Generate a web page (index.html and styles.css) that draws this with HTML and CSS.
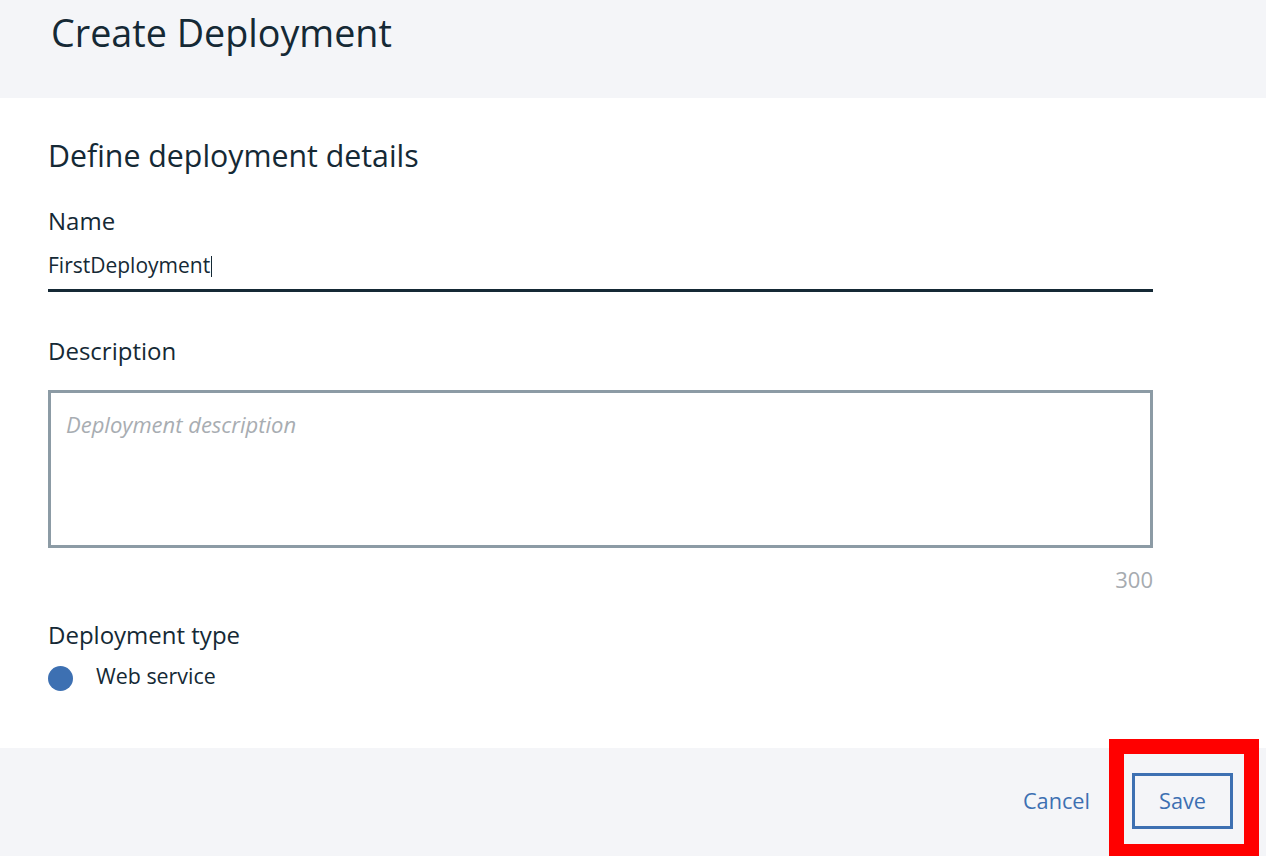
FILE: index.html
```html
<!DOCTYPE html>
<html lang="en">
<head>
<meta charset="utf-8">
<title>Create Deployment</title>
<link rel="stylesheet" href="styles.css">
</head>
<body>
<div class="page">
  <header class="header">
    <h1 class="title">Create Deployment</h1>
  </header>
  <main class="content">
    <h2 class="section-title">Define deployment details</h2>
    <label class="label label-name">Name</label>
    <div class="text-input"><span class="value">FirstDeployment</span><span class="caret"></span></div>
    <label class="label label-desc">Description</label>
    <div class="textarea"><span class="placeholder">Deployment description</span></div>
    <div class="counter">300</div>
    <label class="label label-type">Deployment type</label>
    <div class="radio-row">
      <span class="radio"></span>
      <span class="radio-text">Web service</span>
    </div>
  </main>
  <footer class="footer">
    <button class="btn btn-ghost">Cancel</button>
    <button class="btn btn-secondary">Save</button>
  </footer>
  <div class="highlight"></div>
</div>
</body>
</html>
```
FILE: styles.css
```css
html, body {
  margin: 0;
  padding: 0;
  height: 100%;
  overflow: hidden;
  background: #ffffff;
}
body {
  font-family: "Open Sans", "Noto Sans", sans-serif;
  color: #152935;
}
.page {
  position: relative;
  height: 856px;
  display: flex;
  flex-direction: column;
}
.header {
  height: 98px;
  box-sizing: border-box;
  padding: 14px 0 0 51px;
  background: #f4f5f8;
}
.title {
  margin: 0;
  font-size: 37.7px;
  line-height: 38px;
  font-weight: 400;
}
.content {
  display: flex;
  flex-direction: column;
  padding: 38px 113px 57px 48px;
  background: #ffffff;
}
.section-title {
  margin: 0;
  font-size: 30.3px;
  line-height: 40px;
  font-weight: 400;
}
.label {
  display: block;
  font-size: 24px;
  line-height: 30px;
}
.label-name { margin-top: 30px; }
.label-desc { margin-top: 44px; }
.label-type { margin-top: 27px; }
.text-input {
  margin-top: 15px;
  display: flex;
  align-items: flex-start;
  font-size: 21px;
  line-height: 28px;
  padding-bottom: 10px;
  border-bottom: 3px solid #152935;
}
.caret {
  width: 1px;
  height: 21px;
  margin-top: 5px;
  margin-left: 1px;
  background: #152935;
}
.textarea {
  margin-top: 24px;
  height: 158px;
  box-sizing: border-box;
  border: 3px solid #8c9ba5;
  padding: 18px 15px 0;
  background: #ffffff;
}
.placeholder {
  display: block;
  font-size: 22px;
  line-height: 26px;
  font-style: italic;
  color: #a8adb2;
}
.counter {
  margin-top: 17px;
  align-self: flex-end;
  font-size: 22px;
  line-height: 28px;
  color: #a6abb0;
}
.radio-row {
  margin-top: 16px;
  display: flex;
  align-items: flex-start;
  gap: 23px;
}
.radio {
  width: 25px;
  height: 25px;
  border-radius: 50%;
  background: #3d70b2;
}
.radio-text {
  font-size: 21.4px;
  line-height: 17px;
  margin-top: 1px;
}
.footer {
  flex: 1;
  display: flex;
  justify-content: flex-end;
  align-items: flex-start;
  gap: 30px;
  padding: 25px 33px 0 0;
  background: #f4f5f8;
}
.btn {
  font-family: "Open Sans", "Noto Sans", sans-serif;
  font-size: 21.7px;
  color: #3d70b2;
  background: transparent;
  margin: 0;
  cursor: pointer;
}
.btn-ghost {
  border: none;
  height: 56px;
  padding: 0 12px;
  line-height: 50px;
}
.btn-secondary {
  width: 101px;
  height: 56px;
  border: 3px solid #3d70b2;
  padding: 0;
  line-height: 48px;
}
.highlight {
  position: absolute;
  left: 1109px;
  top: 739px;
  width: 150px;
  height: 120px;
  box-sizing: border-box;
  border: 15px solid #ff0000;
  pointer-events: none;
}
```
